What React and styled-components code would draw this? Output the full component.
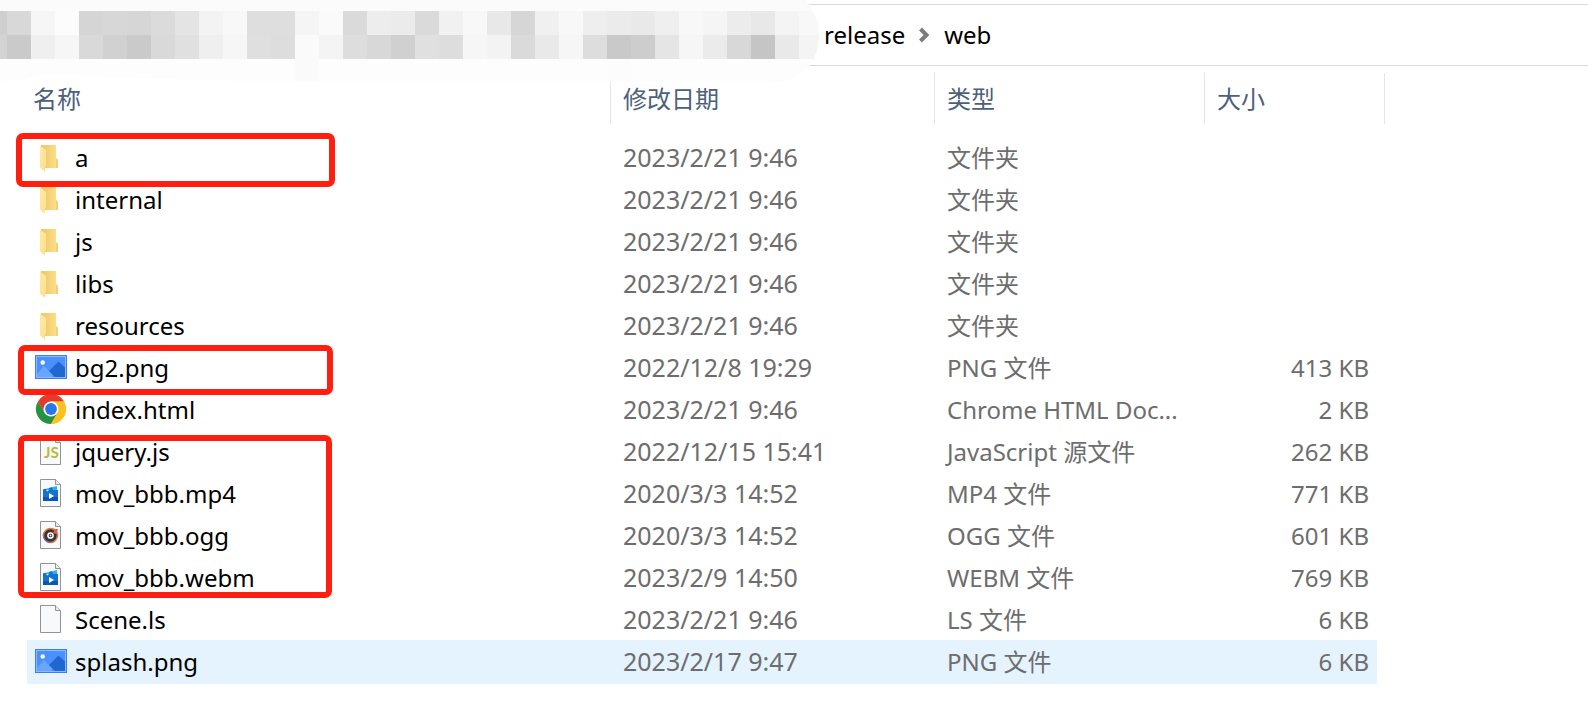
import React from "react";
import styled, { createGlobalStyle, css } from "styled-components";

const GlobalStyle = createGlobalStyle`
  *, *::before, *::after { box-sizing: border-box; }
  body {
    margin: 0;
    background: #fff;
    color: #000;
    font: 24px/32px "Noto Sans", "Noto Sans CJK SC", sans-serif;
  }
`;

const Explorer = styled.main`
  position: relative;
  min-height: 100vh;
  padding-top: 4px;
  overflow: hidden;
`;

const AddressBar = styled.nav`
  display: flex;
  align-items: center;
  height: 62px;
  padding-left: 822px;
  border: solid #d9d9d9;
  border-width: 1px 0;
`;

const Crumb = styled.button`
  padding: 0 2px;
  border: 0;
  background: none;
  color: inherit;
  font: inherit;
`;

const Chevron = styled.svg`
  flex: none;
  width: 35px;
  height: 16px;
`;

const Listing = styled.section`
  position: relative;
  padding: 7px 0 40px 27px;
`;

const FileTable = styled.table`
  width: 1358px;
  table-layout: fixed;
  border-collapse: separate;
  border-spacing: 0;
`;

const Col = styled.col`
  width: ${(p) => p.$w}px;
`;

const HeaderCell = styled.th`
  height: 51px;
  padding: 0 0 0 ${(p) => (p.$first ? 6 : 12)}px;
  border-right: 1px solid #e5e5e5;
  text-align: left;
  vertical-align: middle;
`;

const SortButton = styled.button`
  display: block;
  width: 100%;
  padding: 0;
  border: 0;
  background: none;
  color: #4c607a;
  font: inherit;
  font-weight: 400;
  text-align: left;
`;

const Spacer = styled.tbody`
  td { height: 13px; padding: 0; }
`;

const Cell = styled.td`
  height: 42px;
  padding: 0 0 0 ${(p) => (p.$name ? 8 : 12)}px;
  color: ${(p) => (p.$name ? "#000" : "#6d6d6d")};
  text-align: ${(p) => (p.$right ? "right" : "left")};
  white-space: nowrap;
  vertical-align: middle;
  ${(p) => p.$right && css`padding-right: 8px;`}
  ${(p) => p.$date && css`padding-bottom: 2px; font-size: 25px;`}
`;

const Row = styled.tr`
  ${(p) =>
    p.$selected &&
    css`
      ${Cell} {
        background: #e5f3ff;
        box-shadow: 0 1px #e5f3ff, 0 -1px #e5f3ff;
      }
    `}
`;

const NameLine = styled.div`
  display: flex;
  align-items: center;
  gap: 8px;
`;

const Icon = styled.svg`
  flex: none;
  width: 32px;
  height: 32px;
  margin-bottom: 2px;
`;

const Highlight = styled.div`
  position: absolute;
  left: ${(p) => p.$x}px;
  top: ${(p) => p.$y}px;
  width: ${(p) => p.$w}px;
  height: ${(p) => p.$h}px;
  border: 6px solid #ff1f10;
  border-radius: 7px;
  pointer-events: none;
`;

const Redaction = styled.svg`
  position: absolute;
  left: 0;
  top: 0;
  width: 820px;
  height: 83px;
`;

function FolderIcon() {
  return (
    <Icon viewBox="0 0 32 32" aria-hidden="true">
      <defs>
        <linearGradient id="folderBack" x1="0" x2="1">
          <stop offset="0" stopColor="#ecc668" />
          <stop offset="1" stopColor="#ffe08a" />
        </linearGradient>
        <linearGradient id="folderFront" x1="0" x2="1" y2="1">
          <stop offset="0" stopColor="#ffe9a8" />
          <stop offset="1" stopColor="#ffdf8a" />
        </linearGradient>
      </defs>
      <path d="M6 4H21V17L23 19V27H6Z" fill="url(#folderBack)" />
      <path d="M21 17L23 19V27H21Z" fill="#f2cf78" />
      <path d="M5 4.500L11 9V24.500L10 26V31L5 26.500Z" fill="url(#folderFront)" />
    </Icon>
  );
}

function ImageIcon() {
  return (
    <Icon viewBox="0 0 32 32" aria-hidden="true">
      <rect y="4" width="32" height="24" fill="#3d7ded" />
      <rect x="1.500" y="5.500" width="29" height="21" fill="#4a90ff" stroke="#8db9ff" />
      <path d="M2 23L9 15L17 23V26H2Z" fill="#68a5ff" />
      <path d="M14 20L23.500 10.500L30 16.500V26H20Z" fill="#2067d0" />
      <circle cx="7.700" cy="11.500" r="2.200" fill="#fff" />
    </Icon>
  );
}

function ChromeIcon() {
  return (
    <Icon viewBox="0 0 32 32" aria-hidden="true">
      <circle cx="16" cy="16" r="15" fill="#fcc31e" />
      <path d="M3 8.500A15 15 0 0 1 29 8.500H16L9.500 19.800Z" fill="#e33b2e" />
      <path d="M3 8.500A15 15 0 0 0 16 31L22.500 19.800L9.500 19.800Z" fill="#229342" />
      <path d="M16 31A15 15 0 0 0 29 8.500H16L22.500 19.800Z" fill="#fcc31e" />
      <circle cx="16" cy="16" r="7.500" fill="#fff" />
      <circle cx="16" cy="16" r="5.900" fill="#2a76eb" />
    </Icon>
  );
}

function Sheet({ children }) {
  return (
    <Icon viewBox="0 0 32 32" aria-hidden="true">
      <path d="M5.500 2.500H20.500L25.500 7.500V29.500H5.500Z" fill="#f8f9fa" stroke="#919394" />
      <path d="M20.500 2.500V7.500H25.500" fill="#e9eaeb" stroke="#919394" />
      {children}
    </Icon>
  );
}

function ScriptIcon() {
  return (
    <Sheet>
      <text x="9" y="23" fontFamily="Lato, sans-serif" fontSize="15" fontWeight="700" fill="#b9b93c">JS</text>
    </Sheet>
  );
}

function VideoIcon() {
  return (
    <Sheet>
      <path d="M8 12.500L22 9V13H8Z" fill="#28b3ee" />
      <path d="M8 12.500L11 11.800L12 15H8ZM14 11L17 10.200L18 13.200L15 14Z" fill="#0f73bd" />
      <path d="M8 14.500H12L14 13H23V24H8Z" fill="#1572d0" />
      <path d="M8 20H23V24H8Z" fill="#0b58b0" />
      <path d="M14 16L19 19L14 22Z" fill="#fff" />
    </Sheet>
  );
}

function AudioIcon() {
  return (
    <Sheet>
      <defs>
        <linearGradient id="discRim" x1="1" y1="0" x2="0" y2="1">
          <stop offset="0" stopColor="#f6633d" />
          <stop offset="0.500" stopColor="#e08a4a" />
          <stop offset="1" stopColor="#6c4a9d" />
        </linearGradient>
      </defs>
      <circle cx="15.500" cy="16.500" r="7.800" fill="url(#discRim)" />
      <circle cx="15.500" cy="16.500" r="6.200" fill="#353438" />
      <path d="M18 14L20 10L23 10L21.500 15Z" fill="#ec5948" />
      <circle cx="15.500" cy="16.500" r="2.600" fill="#353438" stroke="#fff" strokeWidth="1.500" />
      <circle cx="15.500" cy="16.500" r="0.900" fill="#fff" />
    </Sheet>
  );
}

const ICONS = {
  folder: FolderIcon,
  image: ImageIcon,
  chrome: ChromeIcon,
  script: ScriptIcon,
  video: VideoIcon,
  audio: AudioIcon,
  file: Sheet,
};

const FILES = [
  ["folder", "a", "2023/2/21 9:46", "文件夹", ""],
  ["folder", "internal", "2023/2/21 9:46", "文件夹", ""],
  ["folder", "js", "2023/2/21 9:46", "文件夹", ""],
  ["folder", "libs", "2023/2/21 9:46", "文件夹", ""],
  ["folder", "resources", "2023/2/21 9:46", "文件夹", ""],
  ["image", "bg2.png", "2022/12/8 19:29", "PNG 文件", "413 KB"],
  ["chrome", "index.html", "2023/2/21 9:46", "Chrome HTML Doc...", "2 KB"],
  ["script", "jquery.js", "2022/12/15 15:41", "JavaScript 源文件", "262 KB"],
  ["video", "mov_bbb.mp4", "2020/3/3 14:52", "MP4 文件", "771 KB"],
  ["audio", "mov_bbb.ogg", "2020/3/3 14:52", "OGG 文件", "601 KB"],
  ["video", "mov_bbb.webm", "2023/2/9 14:50", "WEBM 文件", "769 KB"],
  ["file", "Scene.ls", "2023/2/21 9:46", "LS 文件", "6 KB"],
  ["image", "splash.png", "2023/2/17 9:47", "PNG 文件", "6 KB"],
];

/* Grey levels of the pixelated path, one hex pair per 24px block. */
const MOSAIC = [
  "cf d8 f6 fc d5 d7 d6 db e4 f3 f8 de de f5 fa da ed eb da f1 f8 e8 d6 f0 f8 ee eb e9 ef f8 f5 ec e8 f4 f8",
  "d3 ca ef f6 d9 d1 ca d9 e0 ef f6 df dd fa f4 dd d8 d0 e0 dd f6 f3 da e9 f6 dd c9 cd e5 f6 eb d8 c5 e9 f4",
].map((line) => line.split(" "));

function RedactedPath() {
  return (
    <Redaction viewBox="0 0 820 83" aria-hidden="true">
      <defs>
        <clipPath id="brush">
          <path d="M0 0H806Q819 16 819 35Q819 54 809 66Q796 82 776 82L760 81H240L90 77Q70 73 50 74Q35 75 25 80L0 81Z" />
        </clipPath>
      </defs>
      <g clipPath="url(#brush)" shapeRendering="crispEdges">
        <rect width="820" height="83" fill="#fdfdfd" />
        <rect width="820" height="11" fill="#fbfbfb" />
        {MOSAIC.map((line, r) =>
          line.map((v, i) => (
            <rect key={`${r}-${i}`} x={i * 24 - 17} y={11 + r * 24} width="24" height="24" fill={`#${v}${v}${v}`} />
          ))
        )}
        <rect x="295" y="59" width="24" height="22" fill="#fafafa" />
        <rect x="607" y="59" width="24" height="22" fill="#fcfcfc" />
      </g>
    </Redaction>
  );
}

export default function App() {
  return (
    <>
      <GlobalStyle />
      <Explorer>
        <AddressBar>
          <Crumb type="button">release</Crumb>
          <Chevron viewBox="0 0 35 16" aria-hidden="true">
            <path d="M13.500 2L19.500 8L13.500 14" fill="none" stroke="#7d7d7d" strokeWidth="4" />
          </Chevron>
          <Crumb type="button">web</Crumb>
        </AddressBar>
        <Listing>
          <FileTable>
            <colgroup>
              <Col $w={584} />
              <Col $w={324} />
              <Col $w={270} />
              <Col $w={172} />
              <Col $w={8} />
            </colgroup>
            <thead>
              <tr>
                <HeaderCell scope="col" $first><SortButton type="button">名称</SortButton></HeaderCell>
                <HeaderCell scope="col"><SortButton type="button">修改日期</SortButton></HeaderCell>
                <HeaderCell scope="col"><SortButton type="button">类型</SortButton></HeaderCell>
                <HeaderCell scope="col" colSpan={2}><SortButton type="button">大小</SortButton></HeaderCell>
              </tr>
            </thead>
            <Spacer aria-hidden="true"><tr><td colSpan={5} /></tr></Spacer>
            <tbody>
              {FILES.map(([kind, name, date, type, size]) => {
                const KindIcon = ICONS[kind];
                return (
                  <Row key={name} $selected={name === "splash.png"}>
                    <Cell $name><NameLine><KindIcon />{name}</NameLine></Cell>
                    <Cell $date>{date}</Cell>
                    <Cell>{type}</Cell>
                    <Cell $right>{size}</Cell>
                  </Row>
                );
              })}
            </tbody>
          </FileTable>
          <Highlight $x={16} $y={67} $w={319} $h={54} />
          <Highlight $x={18} $y={279} $w={315} $h={50} />
          <Highlight $x={18} $y={369} $w={314} $h={163} />
        </Listing>
        <RedactedPath />
      </Explorer>
    </>
  );
}
